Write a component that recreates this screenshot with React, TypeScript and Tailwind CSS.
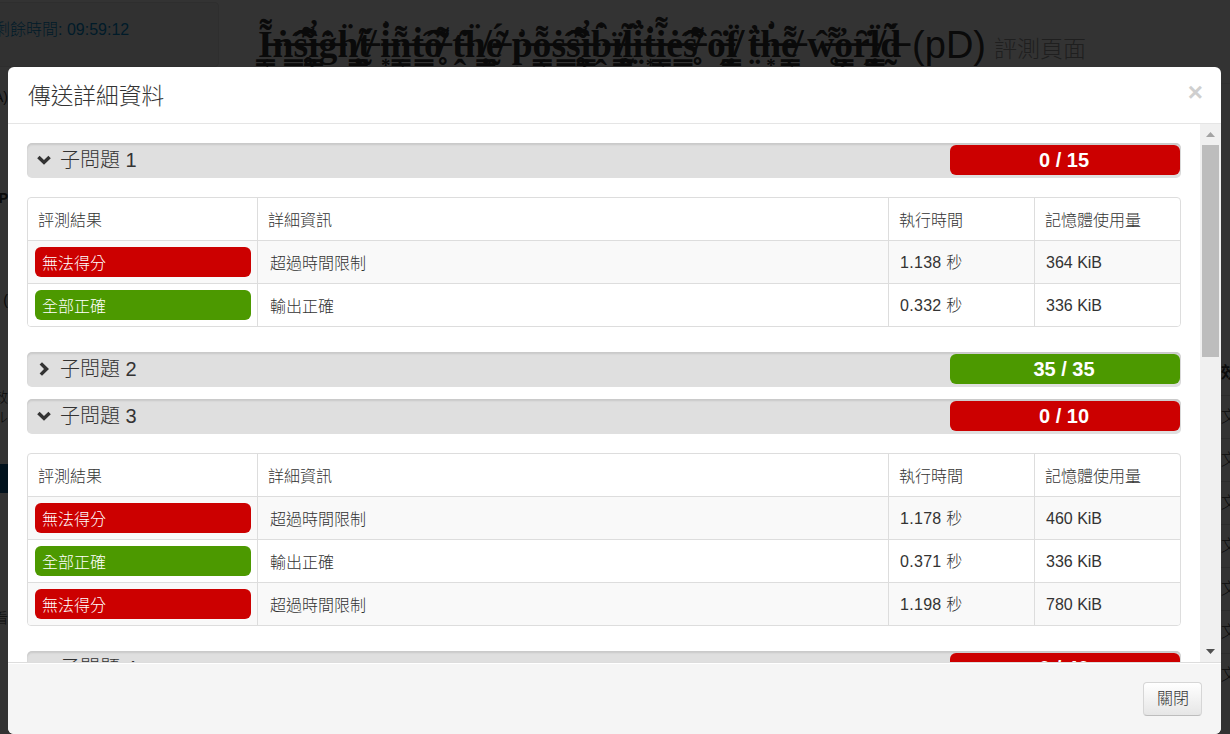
import React from 'react';

const cjk = { fontFamily: '"Liberation Sans", "Noto Sans CJK TC", sans-serif' };

// the problem title on the page behind has stacked combining marks
const marks = [
  '\u034c\u0336\u0354\u0333',
  '\u0361\u0307\u0336\u0333',
  '\u0302\u034c\u0336\u0325',
  '\u0313\u0336\u0347\u0326',
  '\u0311\u0307\u0336\u032d',
  '\u0308\u0338\u0333\u0323',
  '\u0342\u0301\u0336\u0330',
  '\u0313\u0308\u0336\u0324',
  '\u0357\u0307\u0336\u0359',
];
const zalgo = (s: string) =>
  Array.from(s)
    .map((c, i) => (c === ' ' ? '\u0338 ' : c + marks[i % marks.length]))
    .join('');

type Row = { ok: boolean; time: string; mem: string };

const StatusLabel: React.FC<{ ok: boolean }> = ({ ok }) => (
  <div className={`h-[30px] rounded-md pl-[7px] text-base leading-[34px] text-white ${ok ? 'bg-[#4c9900]' : 'bg-[#cc0000]'}`}>
    {ok ? '全部正確' : '無法得分'}
  </div>
);

const SubtaskHeader: React.FC<{ n: number; score: string; ok: boolean; open: boolean }> = ({ n, score, ok, open }) => (
  <div className="flex h-[35px] shrink-0 items-start rounded-[5px] bg-[#dfdfdf] pt-[2px] pr-[1px] shadow-[inset_0_2px_2px_rgba(0,0,0,0.1)]">
    <div className="flex h-[30px] w-[33px] items-center justify-center text-[#333]">
      {open ? (
        <svg width="14" height="10" viewBox="0 0 14 10">
          <path d="M2.6 0.8L7 5.1 11.4 0.8 13.8 3.2 7 9.8 0.2 3.2z" fill="#333" />
        </svg>
      ) : (
        <svg width="11" height="14" viewBox="0 0 11 14" className="ml-[2px]">
          <path d="M0.6 2.4L3 0.2 10 7 3 13.8 0.6 11.6 5 7z" fill="#333" />
        </svg>
      )}
    </div>
    <div className="flex-1 text-xl leading-[31px] text-[#333]">子問題 {n}</div>
    <div className={`h-[30px] w-[230px] rounded-md pr-[2px] text-center text-xl leading-[30px] font-bold text-white ${ok ? 'bg-[#4c9900]' : 'bg-[#cc0000]'}`}>
      {score}
    </div>
  </div>
);

const SubtaskTable: React.FC<{ rows: Row[] }> = ({ rows }) => (
  <div className="mt-[19px] mb-[25px] shrink-0 overflow-hidden rounded-[4px] border border-[#ddd] text-base text-[#333]">
    <div className="flex h-[42px] items-center">
      <div className="flex h-full w-[230px] items-center border-r border-[#ddd] pt-[4px] pl-[10px]">評測結果</div>
      <div className="flex h-full w-[631px] items-center border-r border-[#ddd] pt-[4px] pl-[10px]">詳細資訊</div>
      <div className="flex h-full w-[146px] items-center border-r border-[#ddd] pt-[4px] pl-[10px]">執行時間</div>
      <div className="flex h-full flex-1 items-center pt-[4px] pl-[10px]">記憶體使用量</div>
    </div>
    {rows.map((r, i) => (
      <div key={i} className={`flex h-[43px] items-center border-t border-[#ddd] ${i % 2 === 0 ? 'bg-[#f9f9f9]' : 'bg-white'}`}>
        <div className="flex h-full w-[230px] flex-col justify-center border-r border-[#ddd] pr-[6px] pl-[7px]">
          <StatusLabel ok={r.ok} />
        </div>
        <div className="flex h-full w-[631px] items-center border-r border-[#ddd] pt-[4px] pl-[12px]">{r.ok ? '輸出正確' : '超過時間限制'}</div>
        <div className="flex h-full w-[146px] items-center border-r border-[#ddd] pt-[2px] pl-[11px] tracking-[0.3px]">{r.time}</div>
        <div className="flex h-full flex-1 items-center pt-[2px] pl-[11px]">{r.mem}</div>
      </div>
    ))}
  </div>
);

export default function App() {
  return (
    <div className="relative h-screen w-full overflow-hidden bg-white font-light" style={cjk}>
      {/* page behind the dialog */}
      <div className="flex h-full">
        <div className="w-[219px] shrink-0 text-sm text-[#333]">
          <div className="mt-[2px] ml-[-20px] h-[65px] w-[239px] rounded-[4px] border border-[#e3e3e3] bg-[#f5f5f5] pt-[15px] pl-[13px] text-base whitespace-nowrap text-[#0088cc]">
            剩餘時間: 09:59:12
          </div>
          <div className="mt-[20px] flex h-5 w-[8px] justify-end overflow-hidden">A)</div>
          <div className="mt-[81px] flex h-5 w-[8px] justify-end overflow-hidden font-bold">P</div>
          <div className="mt-[82px] flex h-5 w-[8px] justify-end overflow-hidden">(</div>
          <div className="mt-[77px] flex h-5 w-[8px] justify-end overflow-hidden">效</div>
          <div className="flex h-5 w-[8px] justify-end overflow-hidden">ル</div>
          <div className="mt-[37px] h-[29px] bg-[#0a5d8f]" />
          <div className="mt-[115px] flex h-5 w-[8px] justify-end overflow-hidden">看</div>
        </div>

        <div className="ml-[39px] flex h-[84px] flex-1 items-start border-b border-[#eee] pt-[22px] whitespace-nowrap">
          <span className="text-[37.6px] leading-[46px] font-bold text-[#333]" style={{ fontFamily: '"Liberation Serif", "DejaVu Serif", serif' }}>
            {zalgo('Insight into the possibilities of the world')}
          </span>
          <span className="ml-[11px] text-[38px] leading-[46px] text-[#333]">(pD)</span>
          <span className="mt-[12px] ml-[8px] text-[23px] leading-[30px] text-[#999]">評測頁面</span>
        </div>

        <div className="w-[9px] shrink-0 overflow-hidden text-base whitespace-nowrap text-[#333]">
          <div className="h-[84px] border-b border-[#eee]" />
          <div className="mt-[279px] h-[32px] leading-[20px] font-bold">效</div>
          {[0, 1, 2, 3, 4, 5, 6].map((i) => (
            <div key={i} className="flex h-[43px] items-center border-t border-[#ddd]">文</div>
          ))}
        </div>
      </div>

      <div className="absolute inset-0 bg-black/80" />

      {/* modal */}
      <div className="absolute top-[67px] left-[8px] flex h-[667px] w-[1213px] flex-col overflow-hidden rounded-md bg-white">
        <div className="flex h-[57px] shrink-0 items-center justify-between border-b border-[#e5e5e5] pt-[3px] pr-[18px] pl-[20px]">
          <h3 className="text-[22.7px] text-[#333]">傳送詳細資料</h3>
          <span className="-mt-[9px] text-[26px] font-bold text-[#cfcfcf]">×</span>
        </div>

        <div className="flex min-h-0 flex-1">
          <div className="flex min-w-0 flex-1 flex-col overflow-hidden pt-[19px] pr-[19px] pl-[19px]">
            <SubtaskHeader n={1} score="0 / 15" ok={false} open />
            <SubtaskTable
              rows={[
                { ok: false, time: '1.138 秒', mem: '364 KiB' },
                { ok: true, time: '0.332 秒', mem: '336 KiB' },
              ]}
            />
            <SubtaskHeader n={2} score="35 / 35" ok open={false} />
            <div className="h-[12px] shrink-0" />
            <SubtaskHeader n={3} score="0 / 10" ok={false} open />
            <SubtaskTable
              rows={[
                { ok: false, time: '1.178 秒', mem: '460 KiB' },
                { ok: true, time: '0.371 秒', mem: '336 KiB' },
                { ok: false, time: '1.198 秒', mem: '780 KiB' },
              ]}
            />
            <SubtaskHeader n={4} score="0 / 40" ok={false} open />
          </div>
          {/* scrollbar */}
          <div className="flex w-[21px] shrink-0 flex-col items-center bg-[#f0f0f0]">
            <div className="flex h-[21px] items-center justify-center">
              <svg width="9" height="5" viewBox="0 0 9 5"><path d="M4.5 0L9 5H0z" fill="#a3a3a3" /></svg>
            </div>
            <div className="h-[212px] w-[17px] bg-[#bdbdbd]" />
            <div className="flex-1" />
            <div className="flex h-[21px] items-center justify-center">
              <svg width="9" height="5" viewBox="0 0 9 5"><path d="M0 0H9L4.5 5z" fill="#505050" /></svg>
            </div>
          </div>
        </div>

        <div className="flex h-[72px] shrink-0 items-center justify-end border-t border-[#ddd] bg-[#f5f5f5] pr-[19px] shadow-[inset_0_1px_0_#fff]">
          <button className="h-[34px] w-[59px] rounded-[4px] border border-[#d6d6d6] border-b-[#bdbdbd] bg-gradient-to-b from-white to-[#e6e6e6] pt-[1px] pl-[1px] text-base text-[#333]">關閉</button>
        </div>
      </div>
    </div>
  );
}
